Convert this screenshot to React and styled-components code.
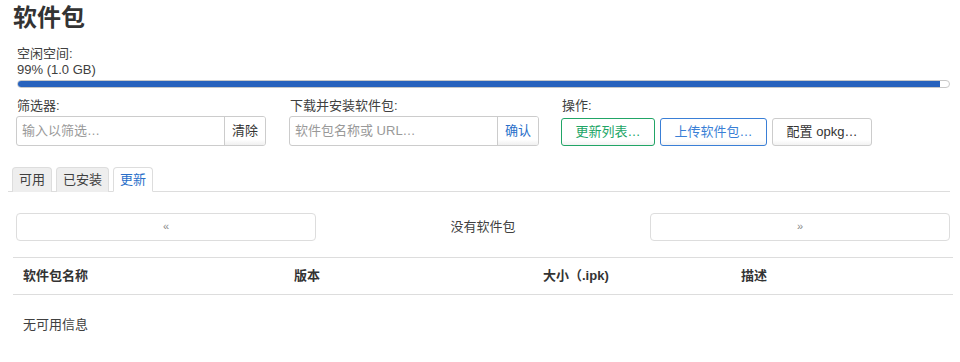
import React from "react";
import styled, { createGlobalStyle } from "styled-components";

const Global = createGlobalStyle`
  html, body { margin: 0; padding: 0; background: #fff; }
  body {
    font-family: "Liberation Sans", "Noto Sans CJK SC", sans-serif;
    font-size: 13px;
    color: #404040;
  }
  * { box-sizing: border-box; }
`;

const Page = styled.div`
  width: 960px;
  padding: 0 10px 0 8px;
`;

const Title = styled.h2`
  margin: 0;
  padding: 2px 0 0 5px;
  height: 40px;
  font-size: 24px;
  line-height: 32px;
  font-weight: bold;
  color: #333;
`;

const Storage = styled.div`
  padding: 6px 0 0 9px;
`;

const Line = styled.div`
  line-height: 16px;
  height: 16px;
`;

const Bar = styled.div`
  margin-top: 2px;
  height: 8px;
  border: 1px solid #c8c8c8;
  border-radius: 4px;
  background: #fff;
  overflow: hidden;
`;

const Fill = styled.div`
  height: 100%;
  background: #2762bd;
`;

const Controls = styled.div`
  display: flex;
  margin-top: 10px;
  padding-left: 8px;
`;

const Group = styled.div`
  display: flex;
  flex-direction: column;
  width: ${(p) => p.$w}px;
  margin-right: ${(p) => p.$mr || 0}px;
`;

const Label = styled.div`
  line-height: 16px;
  height: 18px;
  padding-left: 1px;
`;

const InputGroup = styled.div`
  display: flex;
  height: 30px;
  border: 1px solid #ccc;
  border-radius: 3px;
  overflow: hidden;
`;

const Input = styled.div`
  flex: 1;
  padding: 0 0 0 5px;
  line-height: 28px;
  color: #999;
`;

const AddonBtn = styled.div`
  width: 41px;
  border-left: 1px solid #ccc;
  text-align: center;
  line-height: 28px;
  color: ${(p) => p.$color || "#333"};
  background: linear-gradient(#fff 80%, #f0f0f0);
`;

const Actions = styled.div`
  display: flex;
  gap: 5px;
  margin-top: 2px;
`;

const Btn = styled.div`
  height: 28px;
  width: ${(p) => p.$w}px;
  border: 1px solid ${(p) => p.$border};
  border-radius: 3px;
  color: ${(p) => p.$color};
  text-align: center;
  line-height: 26px;
  background: linear-gradient(#fff 80%, #f2f2f2);
`;

const Tabs = styled.div`
  display: flex;
  margin-top: 21px;
  padding-left: 4px;
  border-bottom: 1px solid #ddd;
  height: 25px;
`;

const Tab = styled.div`
  height: 25px;
  margin-right: 4px;
  padding: 0 6px;
  line-height: 24px;
  border: 1px solid #ddd;
  border-bottom: ${(p) => (p.$active ? "1px solid #fff" : "none")};
  border-radius: 4px 4px 0 0;
  background: ${(p) => (p.$active ? "#fff" : "#eee")};
  color: ${(p) => (p.$active ? "#2a6fc9" : "#404040")};
`;

const Pager = styled.div`
  display: flex;
  align-items: center;
  margin-top: 21px;
  padding-left: 8px;
`;

const PageBtn = styled.div`
  width: 300px;
  height: 28px;
  border: 1px solid #ddd;
  border-radius: 4px;
  text-align: center;
  line-height: 25px;
  font-size: 11px;
  color: #888;
`;

const PagerText = styled.div`
  flex: 1;
  text-align: center;
  padding-bottom: 3px;
`;

const Table = styled.div`
  margin: 16px 0 0 5px;
  width: 940px;
`;

const Row = styled.div`
  display: grid;
  grid-template-columns: 271px 249px 198px 1fr;
  border-top: 1px solid #ddd;
  border-bottom: 1px solid #ddd;
  font-weight: bold;
  color: #333;
  height: 38px;
  align-items: center;
  padding: 0 0 3px 10px;
`;

const EmptyRow = styled.div`
  padding: 19px 0 0 10px;
`;

export default function App() {
  return (
    <Page>
      <Global />
      <Title>软件包</Title>
      <Storage>
        <Line>空闲空间:</Line>
        <Line>99% (1.0 GB)</Line>
        <Bar>
          <Fill style={{ width: "99%" }} />
        </Bar>
      </Storage>
      <Controls>
        <Group $w={250} $mr={23}>
          <Label>筛选器:</Label>
          <InputGroup>
            <Input>输入以筛选…</Input>
            <AddonBtn>清除</AddonBtn>
          </InputGroup>
        </Group>
        <Group $w={250} $mr={22}>
          <Label>下载并安装软件包:</Label>
          <InputGroup>
            <Input>软件包名称或 URL…</Input>
            <AddonBtn $color="#2a6fc9">确认</AddonBtn>
          </InputGroup>
        </Group>
        <Group $w={320}>
          <Label>操作:</Label>
          <Actions>
            <Btn $w={94} $border="#21a566" $color="#21a566">更新列表…</Btn>
            <Btn $w={107} $border="#3a7fd6" $color="#3a7fd6">上传软件包…</Btn>
            <Btn $w={100} $border="#ccc" $color="#333">配置 opkg…</Btn>
          </Actions>
        </Group>
      </Controls>
      <Tabs>
        <Tab>可用</Tab>
        <Tab>已安装</Tab>
        <Tab $active>更新</Tab>
      </Tabs>
      <Pager>
        <PageBtn>«</PageBtn>
        <PagerText>没有软件包</PagerText>
        <PageBtn>»</PageBtn>
      </Pager>
      <Table>
        <Row>
          <div>软件包名称</div>
          <div>版本</div>
          <div>大小（.ipk)</div>
          <div>描述</div>
        </Row>
        <EmptyRow>无可用信息</EmptyRow>
      </Table>
    </Page>
  );
}
